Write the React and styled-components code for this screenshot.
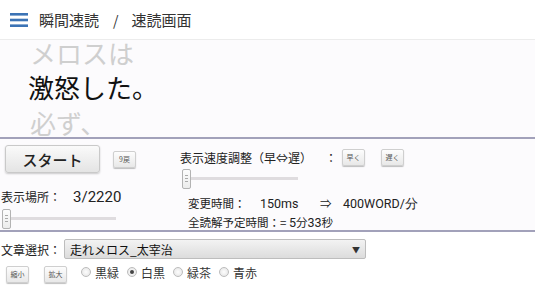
import React from "react";
import styled, { createGlobalStyle } from "styled-components";

const GlobalStyle = createGlobalStyle`
  html, body {
    margin: 0;
    padding: 0;
    background: #ffffff;
  }
  body {
    font-family: "Noto Sans CJK JP", "Roboto", sans-serif;
    color: #222;
  }
`;

const words = [
    { text: "メロスは", current: false },
    { text: "激怒した。", current: true },
    { text: "必ず、", current: false },
];

const themes = ["黒緑", "白黒", "緑茶", "青赤"];

const App = () => {
    const [theme, setTheme] = React.useState("白黒");

    return (
        <Page>
            <GlobalStyle />
            <Header>
                <MenuIcon viewBox="0 0 18 16">
                    <rect x="0" y="1" width="18" height="2.6" fill="#3b73b5" />
                    <rect x="0" y="6.7" width="18" height="2.6" fill="#3b73b5" />
                    <rect x="0" y="12.4" width="18" height="2.6" fill="#3b73b5" />
                </MenuIcon>
                <Crumb>瞬間速読</Crumb>
                <Slash>/</Slash>
                <Crumb>速読画面</Crumb>
            </Header>

            <Reader>
                {words.map((w) => (
                    <Word key={w.text} current={w.current}>
                        {w.text}
                    </Word>
                ))}
            </Reader>

            <Controls>
                <LeftCol>
                    <StartRow>
                        <StartButton>スタート</StartButton>
                        <TinyButton>9戻</TinyButton>
                    </StartRow>
                    <PosRow>
                        <Label>表示場所：</Label>
                        <PosValue>3/2220</PosValue>
                    </PosRow>
                    <Slider width={114} thumb={0} />
                </LeftCol>
                <RightCol>
                    <SpeedRow>
                        <Label>表示速度調整（早⇔遅）</Label>
                        <Colon>：</Colon>
                        <TinyButton>早く</TinyButton>
                        <TinyButton>遅く</TinyButton>
                    </SpeedRow>
                    <Slider width={116} thumb={0} />
                    <Info>
                        <InfoLine>
                            <span>変更時間：</span>
                            <Latin>150ms</Latin>
                            <span>⇒</span>
                            <Latin>400WORD/分</Latin>
                        </InfoLine>
                        <InfoLine plain>
                            全読解予定時間：= <Latin>5</Latin>分<Latin>33</Latin>秒
                        </InfoLine>
                    </Info>
                </RightCol>
            </Controls>

            <Bottom>
                <SelectRow>
                    <Label>文章選択：</Label>
                    <Select>
                        <span>走れメロス_太宰治</span>
                        <Arrow>▼</Arrow>
                    </Select>
                </SelectRow>
                <OptionRow>
                    <TinyButton>縮小</TinyButton>
                    <TinyButton>拡大</TinyButton>
                    <Radios>
                        {themes.map((t) => (
                            <RadioLabel key={t} onClick={() => setTheme(t)}>
                                <RadioDot checked={theme === t} />
                                {t}
                            </RadioLabel>
                        ))}
                    </Radios>
                </OptionRow>
            </Bottom>
        </Page>
    );
};

const Slider = ({ width, thumb }) => (
    <Track style={{ width }}>
        <Thumb style={{ marginLeft: thumb }}>
            <Grip />
        </Thumb>
    </Track>
);

export default App;

const Page = styled.div`
    width: 535px;
    height: 300px;
    overflow: hidden;
    background: #fff;
`;

const Header = styled.div`
    height: 39px;
    display: flex;
    align-items: center;
    padding-left: 10px;
    border-bottom: 1px solid #ececec;
    background: #fff;
`;

const MenuIcon = styled.svg`
    width: 18px;
    height: 16px;
    margin-right: 11px;
`;

const Crumb = styled.span`
    font-size: 15px;
    color: #333;
`;

const Slash = styled.span`
    font-size: 14px;
    color: #333;
    margin: 0 13px 0 14px;
`;

const Reader = styled.div`
    height: 97px;
    background: #fcfbfd;
    border-bottom: 2px solid #a2a1ba;
    padding-left: 28px;
    overflow: hidden;
    display: flex;
    flex-direction: column;
`;

const Word = styled.div`
    font-size: 26px;
    line-height: 34px;
    color: ${(p) => (p.current ? "#111" : "#cfcfcf")};
    margin-left: ${(p) => (p.current ? "0" : "2px")};
    white-space: nowrap;
    flex-shrink: 0;
    &:first-child {
        margin-top: -4px;
    }
    &:last-child {
        margin-top: 2px;
    }
`;

const Controls = styled.div`
    height: 91px;
    background: #fcfbfd;
    border-bottom: 2px solid #a2a1ba;
    display: flex;
    overflow: hidden;
`;

const LeftCol = styled.div`
    width: 180px;
    flex-shrink: 0;
    padding-top: 6px;
    display: flex;
    flex-direction: column;
`;

const StartRow = styled.div`
    display: flex;
    align-items: center;
    gap: 13px;
    padding-left: 5px;
`;

const StartButton = styled.button`
    width: 95px;
    height: 28px;
    border: 1px solid #c9c9c9;
    border-radius: 3px;
    background: linear-gradient(#fafafa, #e4e4e4);
    box-shadow: 0 1px 2px rgba(0, 0, 0, 0.2);
    font-family: "Noto Sans CJK JP", sans-serif;
    font-size: 15px;
    font-weight: 500;
    color: #222;
    padding: 0;
`;

const TinyButton = styled.button`
    height: 17px;
    min-width: 23px;
    padding: 0 3px;
    border: 1px solid #cfcfcf;
    border-radius: 2px;
    background: linear-gradient(#fdfdfd, #e8e8e8);
    box-shadow: 0 1px 1px rgba(0, 0, 0, 0.25);
    font-family: "Noto Sans CJK JP", sans-serif;
    font-size: 7px;
    color: #555;
    line-height: 15px;
`;

const PosRow = styled.div`
    display: flex;
    align-items: baseline;
    margin-top: 15px;
    padding-left: 1px;
`;

const Label = styled.span`
    font-size: 12px;
    color: #222;
    white-space: nowrap;
`;

const PosValue = styled.span`
    font-family: "Roboto", sans-serif;
    font-size: 15px;
    margin-left: 12px;
    color: #222;
`;

const Track = styled.div`
    height: 3px;
    background: #dfdcdf;
    margin: 11px 0 0 2px;
    display: flex;
    align-items: center;
`;

const Thumb = styled.div`
    flex-shrink: 0;
    width: 9px;
    height: 20px;
    box-sizing: border-box;
    border: 1px solid #b3b3b3;
    border-radius: 2px;
    background: linear-gradient(#fdfdfd, #ececec);
    display: flex;
    align-items: center;
    justify-content: center;
`;

const Grip = styled.div`
    width: 3px;
    height: 5px;
    border-top: 1px solid #aaa;
    border-bottom: 1px solid #aaa;
    position: relative;
    &::after {
        content: "";
        position: absolute;
        left: 0;
        right: 0;
        top: 2px;
        border-top: 1px solid #aaa;
    }
`;

const RightCol = styled.div`
    flex: 1;
    padding-top: 10px;
    display: flex;
    flex-direction: column;
`;

const SpeedRow = styled.div`
    display: flex;
    align-items: center;
    ${TinyButton} {
        margin-right: 16px;
    }
`;

const Colon = styled.span`
    font-size: 12px;
    margin: 0 5px 0 13px;
`;

const Info = styled.div`
    padding-left: 8px;
    margin-top: 14px;
    display: flex;
    flex-direction: column;
`;

const InfoLine = styled.div`
    font-size: 11.5px;
    line-height: 19px;
    color: #222;
    white-space: nowrap;
    display: ${(p) => (p.plain ? "block" : "grid")};
    grid-template-columns: 72px 60px 23px auto;
`;

const Latin = styled.span`
    font-family: "Roboto", sans-serif;
    font-size: 12.5px;
`;

const Bottom = styled.div`
    background: #fff;
    padding-top: 7px;
`;

const SelectRow = styled.div`
    display: flex;
    align-items: center;
    padding-left: 1px;
`;

const Select = styled.div`
    margin-left: 3px;
    width: 302px;
    height: 20px;
    box-sizing: border-box;
    border: 1px solid #bdbdbd;
    border-radius: 2px;
    background: linear-gradient(#f3f3f3, #dcdcdc);
    display: flex;
    align-items: center;
    justify-content: space-between;
    padding: 0 5px 0 5px;
    font-size: 12px;
    color: #111;
`;

const Arrow = styled.span`
    font-size: 8px;
    color: #333;
`;

const OptionRow = styled.div`
    display: flex;
    align-items: center;
    padding-left: 6px;
    margin-top: 7px;
    gap: 15px;
`;

const Radios = styled.div`
    display: flex;
    align-items: center;
    gap: 8px;
    margin-left: -1px;
    margin-top: -5px;
`;

const RadioLabel = styled.label`
    display: flex;
    align-items: center;
    gap: 4px;
    font-size: 12px;
    color: #333;
`;

const RadioDot = styled.span`
    width: 10px;
    height: 10px;
    box-sizing: border-box;
    border-radius: 50%;
    border: 1px solid #bcbcbc;
    background: radial-gradient(#fdfdfd, #e2e2e2);
    position: relative;
    ${(p) =>
        p.checked &&
        `
        &::after {
            content: "";
            position: absolute;
            left: 2px;
            top: 2px;
            width: 4px;
            height: 4px;
            border-radius: 50%;
            background: #444;
        }
    `}
`;
